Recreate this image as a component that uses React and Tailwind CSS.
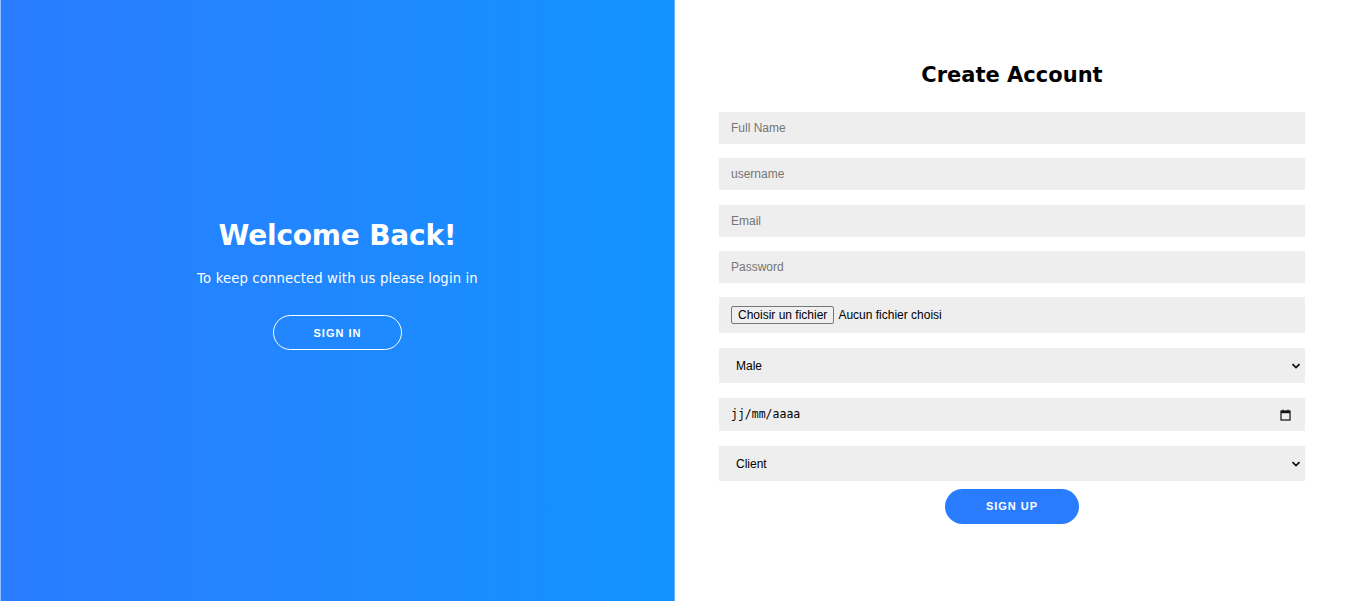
import { useState } from "react"

const heading = { fontFamily: '"DejaVu Sans", "Open Sans", sans-serif' }

function Chevron() {
  return (
    <svg width="10" height="10" viewBox="0 0 10 10" className="pointer-events-none absolute right-[4px] top-1/2 -translate-y-1/2">
      <path d="M1.5 3.2 L5 6.6 L8.5 3.2" fill="none" stroke="#111" strokeWidth="1.8" />
    </svg>
  )
}

function SelectField({ value, options, onChange }) {
  return (
    <div className="relative w-full">
      <select
        value={value}
        onChange={(e) => onChange(e.target.value)}
        className="w-full h-[35px] appearance-none bg-[#eeeeee] pl-[17px] pr-6 text-[12px] text-black outline-none font-['Liberation_Sans',Arial,sans-serif]"
      >
        {options.map((o) => (
          <option key={o}>{o}</option>
        ))}
      </select>
      <Chevron />
    </div>
  )
}

export default function App() {
  const [gender, setGender] = useState("Male")
  const [role, setRole] = useState("Client")

  const inputClass =
    "w-full h-[32px] bg-[#eeeeee] px-[12px] text-[12px] text-black placeholder:text-[#757575] outline-none font-['Liberation_Sans',Arial,sans-serif]"

  return (
    <div className="flex w-full h-[601px] overflow-hidden bg-white">
      {/* Left panel */}
      <div className="w-[675px] shrink-0 h-full bg-gradient-to-r from-[#2a7cff] to-[#1093ff] border-l border-[#8fbfff] border-r border-r-[#6cb8ff] flex flex-col items-center justify-center text-white">
        <h1 style={heading} className="text-[28px] font-bold tracking-[-0.2px] mt-[-36px]">
          Welcome Back!
        </h1>
        <p style={heading} className="text-[13.2px] mt-[12px] tracking-[0.15px]">
          To keep connected with us please login in
        </p>
        <button className="mt-[27px] w-[129px] h-[35px] rounded-full border border-white text-[11px] font-bold tracking-[1px] font-['Liberation_Sans',Arial,sans-serif]">
          SIGN IN
        </button>
      </div>

      {/* Right panel */}
      <div className="flex-1 flex flex-col items-center pt-[61px] px-[44px]">
        <h2 style={heading} className="text-[21px] font-bold text-black leading-[28px]">
          Create Account
        </h2>
        <form className="w-full mt-[23px] flex flex-col" onSubmit={(e) => e.preventDefault()}>
          <input className={inputClass} placeholder="Full Name" />
          <input className={`${inputClass} mt-[14px]`} placeholder="username" />
          <input className={`${inputClass} mt-[15px]`} placeholder="Email" />
          <input className={`${inputClass} mt-[14px]`} type="password" placeholder="Password" />

          <label className="mt-[14px] w-full h-[36px] bg-[#eeeeee] px-[12px] flex items-center gap-[4px] text-[12px] text-black font-['Liberation_Sans',Arial,sans-serif] cursor-pointer">
            <input type="file" className="hidden" />
            <span className="border border-[#767676] bg-[#efefef] rounded-[2px] px-[6px] h-[18px] flex items-center">
              Choisir un fichier
            </span>
            <span>Aucun fichier choisi</span>
          </label>

          <div className="mt-[15px]">
            <SelectField value={gender} options={["Male", "Female"]} onChange={setGender} />
          </div>

          <div className="mt-[15px] w-full h-[33px] bg-[#eeeeee] pl-[12px] pr-[14px] flex items-center justify-between">
            <span className="text-[11.5px] text-black font-['DejaVu_Sans_Mono',monospace]">jj/mm/aaaa</span>
            <svg width="11" height="12" viewBox="0 0 11 12">
              <rect x="1" y="2" width="9" height="9" fill="none" stroke="#111" strokeWidth="1.2" />
              <rect x="1" y="2" width="9" height="2.2" fill="#111" />
              <line x1="3" y1="0.5" x2="3" y2="2" stroke="#111" strokeWidth="1" />
              <line x1="8" y1="0.5" x2="8" y2="2" stroke="#111" strokeWidth="1" />
            </svg>
          </div>

          <div className="mt-[15px]">
            <SelectField value={role} options={["Client", "Admin"]} onChange={setRole} />
          </div>

          <button className="self-center mt-[8px] w-[134px] h-[35px] rounded-full bg-[#2a7cff] text-white text-[11px] font-bold tracking-[1px] font-['Liberation_Sans',Arial,sans-serif]">
            SIGN UP
          </button>
        </form>
      </div>
    </div>
  )
}
